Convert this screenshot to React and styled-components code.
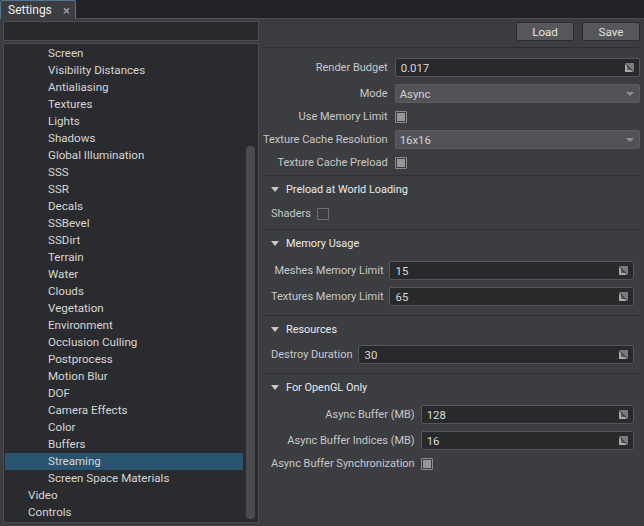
import React from 'react'
import styled, { createGlobalStyle } from 'styled-components'

const GlobalStyle = createGlobalStyle`
  html, body { margin: 0; padding: 0; background: #3b3d41; }
  body { font-family: Roboto, "Noto Sans", "Liberation Sans", sans-serif; font-size: 11px; }
  * { box-sizing: border-box; }
`

const Window = styled.div`
  width: 644px;
  height: 526px;
  background: #3b3d41;
  display: flex;
  flex-direction: column;
  overflow: hidden;
`

const TabBar = styled.div`
  height: 19px;
  flex-shrink: 0;
  background: #212225;
  border-bottom: 1px solid #4d4f53;
  display: flex;
  align-items: flex-end;
`

const Tab = styled.div`
  width: 76px;
  height: 19px;
  margin-bottom: -1px;
  background: #3b3d41;
  border: 1px solid #50758f;
  border-bottom: none;
  border-radius: 2px 2px 0 0;
  display: flex;
  align-items: center;
  justify-content: space-between;
  padding: 0 5px 0 7px;
  color: #f0f0f0;
  font-size: 12px;
`

const Close = styled.span`
  color: #a8a8a8;
  font-size: 13px;
`

const Body = styled.div`
  flex: 1;
  display: flex;
  min-height: 0;
`

const LeftPane = styled.div`
  width: 259px;
  padding: 2px 0 3px 3px;
  display: flex;
  flex-direction: column;
  gap: 2px;
`

const Search = styled.div`
  height: 20px;
  flex-shrink: 0;
  background: #28292b;
  border: 1px solid #4a4c50;
`

const Tree = styled.div`
  flex: 1;
  min-height: 0;
  overflow: hidden;
  background: #2a2b2e;
  border: 1px solid #4a4c50;
  display: flex;
  padding: 1px 3px 2px 1px;
`

const List = styled.div`
  flex: 1;
  display: flex;
  flex-direction: column;
`

const Item = styled.div`
  height: 17px;
  flex-shrink: 0;
  line-height: 17px;
  padding-left: ${p => p.$depth * 20 + 23}px;
  color: #d6d6d6;
  font-size: 11.6px;
  white-space: nowrap;
  background: ${p => (p.$active ? '#28546f' : 'transparent')};
  margin-right: 3px;
`

const Track = styled.div`
  width: 9px;
  padding: 101px 0 1px;
  display: flex;
`

const Thumb = styled.div`
  flex: 1;
  background: #4a4b4f;
  border-radius: 4px;
`

const RightPane = styled.div`
  flex: 1;
  padding: 3px 4px 0 4px;
  display: flex;
  flex-direction: column;
`

const Toolbar = styled.div`
  display: flex;
  justify-content: flex-end;
  gap: 8px;
  padding-bottom: 6px;
  border-bottom: 1px solid #2e2f32;
`

const Button = styled.div`
  width: 58px;
  height: 19px;
  background: #55575b;
  border: 1px solid #2c2d30;
  border-radius: 2px;
  color: #e2e2e2;
  font-size: 11.6px;
  display: flex;
  align-items: center;
  justify-content: center;
`

const Form = styled.div`
  display: grid;
  grid-template-columns: auto 1fr;
  column-gap: ${p => p.$gap || 6}px;
  row-gap: 7px;
  align-items: center;
  padding: ${p => p.$pad};
`

const Label = styled.div`
  text-align: right;
  color: #c8c8c8;
  font-size: 11px;
  white-space: nowrap;
  line-height: 13px;
`

const Field = styled.div`
  height: 19px;
  background: #28292b;
  border: 1px solid #55575b;
  border-radius: 2px;
  display: flex;
  align-items: center;
  justify-content: space-between;
  padding: 0 5px 0 5px;
  color: #dadada;
  font-size: 11.4px;
`

const Select = styled(Field)`
  background: #515357;
  border-color: #5a5c60;
  padding: 0 5px 0 4px;
  color: #d2d2d2;
`

const Arrow = styled.span`
  width: 0;
  height: 0;
  border-left: 4px solid transparent;
  border-right: 4px solid transparent;
  border-top: 4px solid #8e9094;
`

const Check = styled.div`
  width: 12px;
  height: 12px;
  border: 1px solid ${p => (p.$on ? '#8c8c8c' : '#6e7074')};
  border-radius: 1px;
  padding: 1px;
  display: flex;
`

const CheckFill = styled.div`
  flex: 1;
  background: #979797;
`

const Section = styled.div`
  border-top: 1px solid #2e2f32;
`

const Header = styled.div`
  height: 27px;
  display: flex;
  align-items: center;
  gap: 7px;
  padding-left: 8px;
  color: #eaeaea;
  font-size: 10.9px;
`

const Caret = styled.span`
  width: 0;
  height: 0;
  border-left: 4px solid transparent;
  border-right: 4px solid transparent;
  border-top: 5px solid #c8c8c8;
`

const Inline = styled.div`
  display: flex;
  align-items: center;
  gap: 6px;
  padding: 4px 0 9px 8px;
`

const Spin = () => (
  <svg width="9" height="9" viewBox="0 0 9 9">
    <rect x="0" y="0" width="9" height="9" fill="#7a7a7a" />
    <polygon points="0,0 9,9 0,9" fill="#a8a8a8" />
    <polygon points="2,2 7,7 2,7" fill="#5a5a5a" />
    <polygon points="0,0 9,9 8,9 0,1" fill="#2b2b2b" />
  </svg>
)

const tree = [
  'Screen', 'Visibility Distances', 'Antialiasing', 'Textures', 'Lights', 'Shadows',
  'Global Illumination', 'SSS', 'SSR', 'Decals', 'SSBevel', 'SSDirt', 'Terrain', 'Water',
  'Clouds', 'Vegetation', 'Environment', 'Occlusion Culling', 'Postprocess', 'Motion Blur',
  'DOF', 'Camera Effects', 'Color', 'Buffers', 'Streaming', 'Screen Space Materials',
]

function NumberField({ value }) {
  return (
    <Field>
      <span>{value}</span>
      <Spin />
    </Field>
  )
}

function Checkbox({ on }) {
  return <Check $on={on}>{on && <CheckFill />}</Check>
}

function Group({ title, children }) {
  return (
    <Section>
      <Header>
        <Caret />
        {title}
      </Header>
      {children}
    </Section>
  )
}

export default function App() {
  return (
    <Window>
      <GlobalStyle />
      <TabBar>
        <Tab>
          Settings <Close>×</Close>
        </Tab>
      </TabBar>
      <Body>
        <LeftPane>
          <Search />
          <Tree>
            <List>
              {tree.map(name => (
                <Item key={name} $depth={1} $active={name === 'Streaming'}>
                  {name}
                </Item>
              ))}
              <Item $depth={0}>Video</Item>
              <Item $depth={0}>Controls</Item>
            </List>
            <Track>
              <Thumb />
            </Track>
          </Tree>
        </LeftPane>

        <RightPane>
          <Toolbar>
            <Button>Load</Button>
            <Button>Save</Button>
          </Toolbar>

          <Form $gap={7} $pad="10px 0 6px 0">
            <Label>Render Budget</Label>
            <NumberField value="0.017" />
            <Label>Mode</Label>
            <Select>
              <span>Async</span>
              <Arrow />
            </Select>
            <Label>Use Memory Limit</Label>
            <Checkbox on />
            <Label>Texture Cache Resolution</Label>
            <Select>
              <span>16x16</span>
              <Arrow />
            </Select>
            <Label>Texture Cache Preload</Label>
            <Checkbox on />
          </Form>

          <Group title="Preload at World Loading">
            <Inline>
              <Label>Shaders</Label>
              <Checkbox />
            </Inline>
          </Group>

          <Group title="Memory Usage">
            <Form $pad="4px 6px 9px 8px">
              <Label>Meshes Memory Limit</Label>
              <NumberField value="15" />
              <Label>Textures Memory Limit</Label>
              <NumberField value="65" />
            </Form>
          </Group>

          <Group title="Resources">
            <Form $pad="2px 6px 9px 8px">
              <Label>Destroy Duration</Label>
              <NumberField value="30" />
            </Form>
          </Group>

          <Group title="For OpenGL Only">
            <Form $pad="4px 6px 9px 8px">
              <Label>Async Buffer (MB)</Label>
              <NumberField value="128" />
              <Label>Async Buffer Indices (MB)</Label>
              <NumberField value="16" />
              <Label>Async Buffer Synchronization</Label>
              <Checkbox on />
            </Form>
          </Group>
        </RightPane>
      </Body>
    </Window>
  )
}
